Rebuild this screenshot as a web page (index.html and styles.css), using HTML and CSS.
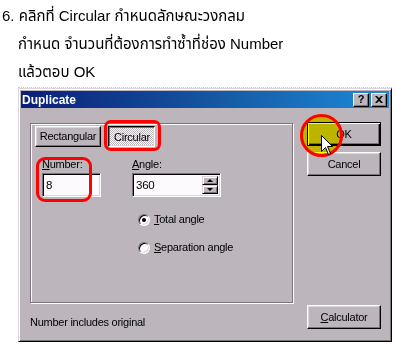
FILE: index.html
```html
<!DOCTYPE html>
<html lang="th">
<head>
<meta charset="utf-8">
<title>Duplicate</title>
<link rel="stylesheet" href="styles.css">
</head>
<body>
<div class="page">
  <div class="intro">
    <p class="line first">6. คลิกที่ Circular กำหนดลักษณะวงกลม</p>
    <p class="line">กำหนด จำนวนที่ต้องการทำซ้ำที่ช่อง Number</p>
    <p class="line">แล้วตอบ OK</p>
  </div>
  <div class="sep"></div>
  <div class="dialog">
    <div class="titlebar">
      <span class="title">Duplicate</span>
      <div class="caps">
        <span class="cap help">?</span>
        <span class="cap close"><svg width="8" height="7" viewBox="0 0 8 7"><path d="M0 0 L2 0 L4 2 L6 0 L8 0 L5 3.5 L8 7 L6 7 L4 5 L2 7 L0 7 L3 3.5 Z" fill="#000"/></svg></span>
      </div>
    </div>
    <div class="body">
      <div class="left">
        <div class="group">
          <div class="tabs">
            <span class="btn tab rect">Rectangular</span>
            <span class="btn tab circ pressed">Circular</span>
          </div>
          <div class="fields">
            <div class="field">
              <span class="label"><u>N</u>umber:</span>
              <div class="input w-num">8</div>
            </div>
            <div class="field">
              <span class="label"><u>A</u>ngle:</span>
              <div class="input w-ang">
                <span>360</span>
                <div class="spin"><span class="sb up"></span><span class="sb down"></span></div>
              </div>
            </div>
          </div>
          <div class="radios">
            <div class="radio-row"><span class="radio on"></span><span><u>T</u>otal angle</span></div>
            <div class="radio-row"><span class="radio"></span><span><u>S</u>eparation angle</span></div>
          </div>
        </div>
        <div class="note">Number includes original</div>
      </div>
      <div class="right">
        <span class="btn default">OK</span>
        <span class="btn cancel">Cancel</span>
        <span class="btn calc"><span><u>C</u>alculator</span></span>
      </div>
    </div>
  </div>

  <div class="mark m-circ"></div>
  <div class="mark m-num"></div>
  <div class="hl"></div>
  <div class="ring"></div>
  <svg class="cursor" width="13" height="21" viewBox="0 0 13 21">
    <path d="M0.5 0.5 L0.5 16.5 L4.5 12.5 L7.5 19.5 L9.5 18.5 L6.5 11.5 L11.5 11.5 Z" fill="#fff" stroke="#000" stroke-width="1"/>
  </svg>
</div>
</body>
</html>
```

FILE: styles.css
```css
body {
  margin: 0;
  background: #fff;
  font-family: "Liberation Sans", Arial, "Noto Sans Thai", Tahoma, sans-serif;
  color: #000;
}

.page {
  position: relative;
  width: 396px;
  height: 344px;
  overflow: hidden;
}

.intro {
  padding-top: 2px;
  font-size: 15px;
  line-height: 28px;
}

.line {
  margin: 0;
  height: 28px;
  padding-left: 18px;
  white-space: nowrap;
}

.line.first {
  padding-left: 2px;
}

.sep {
  margin: 1px 0 0 18px;
  width: 374px;
  border-top: 1px dotted #c8c8c8;
}

.dialog {
  margin-left: 18px;
  width: 374px;
  height: 254px;
  box-sizing: border-box;
  background: #bcb5bc;
  border: 1px solid;
  border-color: #dcd6dc #000 #000 #dcd6dc;
  box-shadow: inset 1px 1px 0 #fff, inset -1px -1px 0 #7b737b;
  padding: 2px;
  display: flex;
  flex-direction: column;
  font-size: 11px;
  letter-spacing: -0.25px;
}

.titlebar {
  height: 17px;
  flex: none;
  background: linear-gradient(90deg, #0a1e78 0%, #14559f 50%, #1e8ad8 100%);
  display: flex;
  align-items: center;
  justify-content: space-between;
  padding: 0 2px 0 1px;
}

.title {
  color: #fff;
  font-weight: bold;
  font-size: 12px;
  letter-spacing: 0;
}

.caps {
  display: flex;
  gap: 2px;
}

.cap {
  width: 16px;
  height: 14px;
  box-sizing: border-box;
  background: #bcb5bc;
  border: 1px solid;
  border-color: #fff #000 #000 #fff;
  box-shadow: inset -1px -1px 0 #7b737b;
  display: flex;
  align-items: center;
  justify-content: center;
  font-weight: bold;
  font-size: 11px;
  letter-spacing: 0;
  line-height: 1;
}

.body {
  flex: 1;
  display: flex;
  padding: 14px 8px 10px 9px;
}

.left {
  width: 263px;
  display: flex;
  flex-direction: column;
}

.group {
  margin-top: 1px;
  height: 180px;
  box-sizing: border-box;
  border: 1px solid #7b737b;
  box-shadow: 1px 1px 0 #fff, inset 1px 1px 0 #fff;
  padding: 2px 0 0 4px;
}

.btn {
  box-sizing: border-box;
  display: flex;
  align-items: center;
  justify-content: center;
  background: #bcb5bc;
  border: 1px solid;
  border-color: #fff #000 #000 #fff;
  box-shadow: inset -1px -1px 0 #7b737b, inset 1px 1px 0 #dcd6dc;
  line-height: 13px;
}

.tabs {
  display: flex;
  gap: 7px;
  height: 21px;
}

.tab.rect {
  width: 66px;
}

.tab.circ {
  width: 47px;
}

.btn.pressed {
  border-color: #000 #fff #fff #000;
  box-shadow: inset 1px 1px 0 #7b737b, inset -1px -1px 0 #dcd6dc;
  background: repeating-conic-gradient(#ffffff 0 25%, #bcb5bc 0 50%) 0 0 / 2px 2px;
  padding: 1px 0 0 1px;
}

.fields {
  display: flex;
  gap: 31px;
  margin-top: 11px;
  padding-left: 7px;
}

.label {
  display: block;
  height: 13px;
  line-height: 13px;
}

.input {
  margin-top: 2px;
  height: 24px;
  box-sizing: border-box;
  background: #fdfafd;
  border: 1px solid;
  border-color: #7b737b #fff #fff #7b737b;
  box-shadow: inset 1px 1px 0 #000, inset -1px -1px 0 #dcd6dc;
  padding: 2px 2px 2px 3px;
  display: flex;
  align-items: center;
  font-size: 11.5px;
}

.w-num {
  width: 59px;
}

.w-ang {
  width: 89px;
  justify-content: space-between;
  align-items: stretch;
}

.w-ang > span {
  display: flex;
  align-items: center;
}

.spin {
  width: 16px;
  display: flex;
  flex-direction: column;
}

.sb {
  flex: 1;
  box-sizing: border-box;
  background: #bcb5bc;
  border: 1px solid;
  border-color: #dcd6dc #000 #000 #dcd6dc;
  box-shadow: inset 1px 1px 0 #fff, inset -1px -1px 0 #7b737b;
  display: flex;
  align-items: center;
  justify-content: center;
}

.sb.up::after {
  content: "";
  border-left: 3px solid transparent;
  border-right: 3px solid transparent;
  border-bottom: 3px solid #000;
}

.sb.down::after {
  content: "";
  border-left: 3px solid transparent;
  border-right: 3px solid transparent;
  border-top: 3px solid #000;
}

.radios {
  margin-top: 16px;
  padding-left: 103px;
}

.radio-row {
  display: flex;
  align-items: center;
  gap: 4px;
  height: 13px;
  line-height: 13px;
}

.radio-row + .radio-row {
  margin-top: 15px;
}

.radio {
  position: relative;
  width: 12px;
  height: 12px;
  box-sizing: border-box;
  border-radius: 50%;
  background: #fff;
  border: 1px solid;
  border-color: #7b737b #fff #fff #7b737b;
  box-shadow: inset 1px 1px 0 #000, inset -1px -1px 0 #dcd6dc;
}

.radio.on::after {
  content: "";
  position: absolute;
  left: 3px;
  top: 3px;
  width: 4px;
  height: 4px;
  border-radius: 50%;
  background: #000;
}

.note {
  margin-top: 13px;
  line-height: 13px;
}

.right {
  margin-left: 14px;
  width: 74px;
  display: flex;
  flex-direction: column;
}

.right .btn {
  height: 24px;
}

.btn.default {
  border: 1px solid #000;
  box-shadow: inset 1px 1px 0 #fff, inset -1px -1px 0 #000, inset -2px -2px 0 #7b737b;
}

.btn.cancel {
  margin-top: 6px;
}

.btn.calc {
  margin-top: auto;
}

.mark {
  position: absolute;
  box-sizing: border-box;
  border: 3px solid #ff0000;
  border-radius: 7px;
}

.m-circ {
  left: 104px;
  top: 120px;
  width: 57px;
  height: 31px;
}

.m-num {
  left: 36px;
  top: 157px;
  width: 56px;
  height: 45px;
  border-radius: 9px;
}

.hl {
  position: absolute;
  left: 300px;
  top: 114px;
  width: 43px;
  height: 43px;
  border-radius: 50%;
  background: #ffff00;
  mix-blend-mode: multiply;
}

.ring {
  position: absolute;
  left: 300px;
  top: 114px;
  width: 43px;
  height: 43px;
  box-sizing: border-box;
  border-radius: 50%;
  border: 3px solid #ff0000;
}

.cursor {
  position: absolute;
  left: 321px;
  top: 135px;
}
```
